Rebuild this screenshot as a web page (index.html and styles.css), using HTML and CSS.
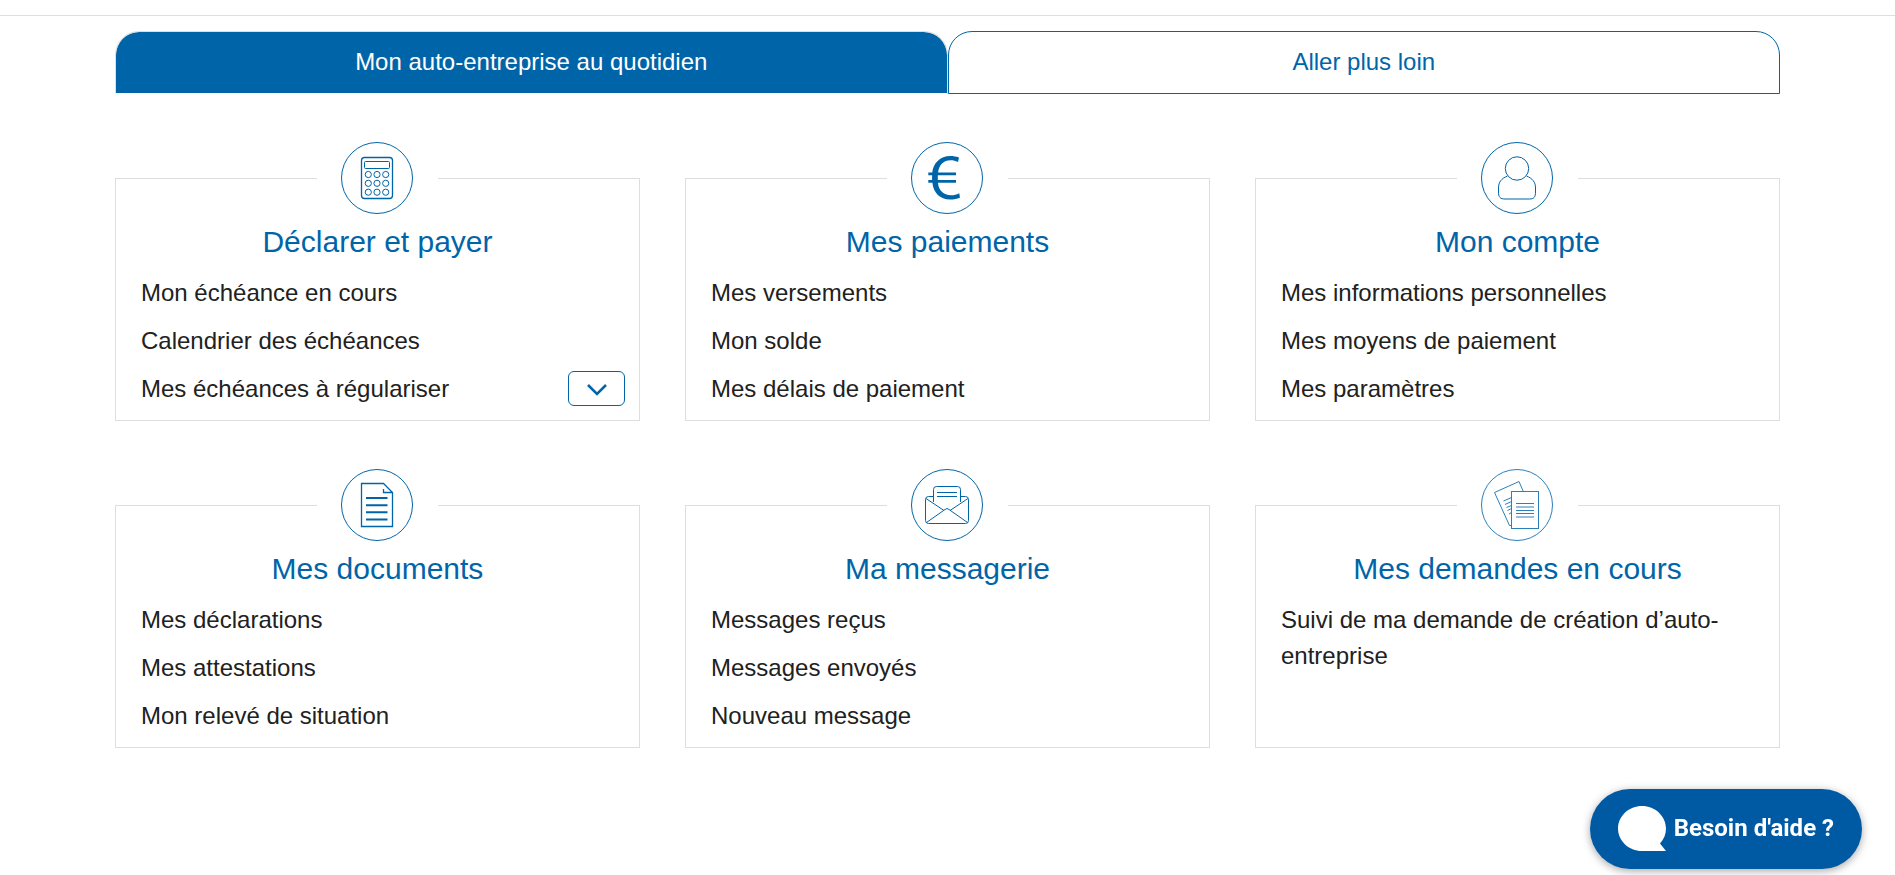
FILE: index.html
```html
<!DOCTYPE html>
<html lang="fr">
<head>
  <meta charset="UTF-8">
  <meta name="viewport" content="width=device-width, initial-scale=1.0">
  <title>Mon auto-entreprise</title>
  <link rel="stylesheet" href="styles.css">
</head>
<body>
  <header class="header"></header>

  <main class="container">
    <nav class="tabs">
      <a class="tab active" href="#quotidien">Mon auto-entreprise au quotidien</a>
      <a class="tab" href="#plus-loin">Aller plus loin</a>
    </nav>

    <div class="cards" id="quotidien">
      <section class="card">
        <div class="card-icon">
          <svg viewBox="0 0 72 72" aria-hidden="true">
            <circle cx="36" cy="36" r="35.5"/>
            <rect class="medium" x="20.5" y="15.5" width="31" height="41" rx="3"/>
            <rect x="23.5" y="19.5" width="25" height="7" rx="1"/>
            <circle cx="27.3" cy="32.5" r="3.1"/>
            <circle cx="36" cy="32.5" r="3.1"/>
            <circle cx="44.7" cy="32.5" r="3.1"/>
            <circle cx="27.3" cy="41.3" r="3.1"/>
            <circle cx="36" cy="41.3" r="3.1"/>
            <circle cx="44.7" cy="41.3" r="3.1"/>
            <circle cx="27.3" cy="50.2" r="3.1"/>
            <circle cx="36" cy="50.2" r="3.1"/>
            <circle cx="44.7" cy="50.2" r="3.1"/>
          </svg>
        </div>
        <h2 class="card-title">Déclarer et payer</h2>
        <ul class="card-list">
          <li><a href="#">Mon échéance en cours</a></li>
          <li><a href="#">Calendrier des échéances</a></li>
          <li>
            <a href="#">Mes échéances à régulariser</a>
            <button class="toggle" type="button" aria-label="Afficher les échéances">
              <svg viewBox="0 0 20 12" aria-hidden="true"><path d="M1 1L10 10L19 1"/></svg>
            </button>
          </li>
        </ul>
      </section>

      <section class="card">
        <div class="card-icon">
          <svg viewBox="0 0 72 72" aria-hidden="true">
            <circle cx="36" cy="36" r="35.5"/>
            <path class="fill" d="M48 15.5C45 14.5 42.5 14 39.5 14C29 14 22 21.5 21.3 30.5H17.3V33.3H21.1V38H17.3V40.8H21.400C22.5 51 29 57.5 39 57.5C43 57.5 46 57 49 55.5L48.2 51.2C45.5 52.6 43 53.2 40 53.2C32.5 53.2 27.5 48.5 27 40.8H45V38H26.8V33.3H45V30.5H27.1C28 23 32.5 18.3 39.5 18.3C42.5 18.3 44.5 18.8 47 20Z"/>
          </svg>
        </div>
        <h2 class="card-title">Mes paiements</h2>
        <ul class="card-list">
          <li><a href="#">Mes versements</a></li>
          <li><a href="#">Mon solde</a></li>
          <li><a href="#">Mes délais de paiement</a></li>
        </ul>
      </section>

      <section class="card">
        <div class="card-icon">
          <svg viewBox="0 0 72 72" aria-hidden="true">
            <circle cx="36" cy="36" r="35.5"/>
            <circle cx="36" cy="26.5" r="11.7"/>
            <path d="M26.5 34C20.5 36.5 17.5 40 17.5 46V50C17.5 55 19 57 24 57H48.5C53 57 54.5 55 54.5 50V46C54.5 40 51.5 36.5 45.5 34"/>
          </svg>
        </div>
        <h2 class="card-title">Mon compte</h2>
        <ul class="card-list">
          <li><a href="#">Mes informations personnelles</a></li>
          <li><a href="#">Mes moyens de paiement</a></li>
          <li><a href="#">Mes paramètres</a></li>
        </ul>
      </section>

      <section class="card">
        <div class="card-icon">
          <svg viewBox="0 0 72 72" aria-hidden="true">
            <circle cx="36" cy="36" r="35.5"/>
            <path class="medium" d="M42.5 14.5H20.5V57.5H51.5V23.5ZM42.5 20V23.5H51.5"/>
            <path class="bold" d="M25 29H46.5M25 36.2H46.5M25 43.3H46.5M25 50.5H46.5"/>
          </svg>
        </div>
        <h2 class="card-title">Mes documents</h2>
        <ul class="card-list">
          <li><a href="#">Mes déclarations</a></li>
          <li><a href="#">Mes attestations</a></li>
          <li><a href="#">Mon relevé de situation</a></li>
        </ul>
      </section>

      <section class="card">
        <div class="card-icon">
          <svg viewBox="0 0 72 72" aria-hidden="true">
            <circle cx="36" cy="36" r="35.5"/>
            <path d="M22.5 27.5H17.5Q14.5 27.5 14.5 30.5V51.5Q14.5 54.5 17.5 54.5H54.5Q57.5 54.5 57.5 51.5V30.5Q57.5 27.5 54.5 27.5H49.5"/>
            <path d="M22.5 33V20.5Q22.5 17.5 25.5 17.5H46.5Q49.5 17.5 49.5 20.5V33"/>
            <path d="M15 29.5L33 41.5M57 29.5L39 41.5M15.5 53.5L34 40.5Q36 38.5 38 40.5L56.5 53.5"/>
            <path d="M26 23.5H46M26 27.5H46"/>
          </svg>
        </div>
        <h2 class="card-title">Ma messagerie</h2>
        <ul class="card-list">
          <li><a href="#">Messages reçus</a></li>
          <li><a href="#">Messages envoyés</a></li>
          <li><a href="#">Nouveau message</a></li>
        </ul>
      </section>

      <section class="card">
        <div class="card-icon">
          <svg class="light" viewBox="0 0 72 72" aria-hidden="true">
            <circle cx="36" cy="36" r="35.5"/>
            <path d="M30.5 56.5H28.5L13.5 23.5L38 12.5L42.5 23"/>
            <path d="M22.5 32L30.5 28.5M24 35.5L30.5 32.5M25.5 38.5L30.5 36.5M26.5 41.5L30.5 39.5M28 45L30.5 43.5"/>
            <rect x="30.5" y="22.5" width="27" height="37"/>
            <path d="M35 34.5H53M35 38H53M35 41.5H53M35 44.5H53M35 48H53"/>
          </svg>
        </div>
        <h2 class="card-title">Mes demandes en cours</h2>
        <ul class="card-list">
          <li><a href="#">Suivi de ma demande de création d’auto-entreprise</a></li>
        </ul>
      </section>
    </div>
  </main>

  <button class="help" type="button">
    <svg viewBox="0 0 48 45" aria-hidden="true">
      <path d="M24 0C37 0 48 10 48 22.5C48 28 46 33 42 37.5L48 45H24C11 45 0 35 0 22.5C0 10 11 0 24 0Z"/>
    </svg>
    Besoin d'aide ?
  </button>
</body>
</html>
```
FILE: styles.css
```css
:root {
  --blue: #0065a8;
  --help-blue: #005aa3;
  --text: #212121;
  --border: #dedede;
}

* {
  box-sizing: border-box;
}

body {
  margin: 0;
  font-family: "Liberation Sans", Arial, sans-serif;
  font-size: 24px;
  line-height: 36px;
  color: var(--text);
  background-color: #fff;
}

a {
  color: inherit;
  text-decoration: none;
}

.header {
  height: 16px;
  border-bottom: 1px solid var(--border);
}

.container {
  max-width: 1665px;
  margin: 15px auto 0;
}

.tabs {
  display: flex;
}

.tab {
  flex: 1;
  padding: 12px 12px 13px;
  text-align: center;
  color: var(--blue);
  border: 1px solid var(--blue);
  border-radius: 24px 24px 0 0;
}

.tab.active {
  color: #fff;
  background-color: var(--blue);
  background-clip: padding-box;
  border-color: var(--border);
  border-bottom-color: #fff;
}

.cards {
  display: grid;
  grid-template-columns: repeat(3, 1fr);
  gap: 84px 45px;
  margin-top: 84px;
}

.card {
  min-height: 243px;
  border: 1px solid var(--border);
}

/* the white background cuts the card's top border */
.card-icon {
  width: 121px;
  margin: -37px auto 0;
  padding: 0 24px;
  background-color: #fff;
}

.card-icon svg {
  display: block;
  width: 72px;
  height: 72px;
  fill: none;
  stroke: var(--blue);
  stroke-width: 1;
}

.card-icon .light {
  stroke: #2c80ba;
}

.card-icon .medium {
  stroke-width: 1.3;
}

.card-icon .bold {
  stroke-width: 2;
}

.card-icon .fill {
  fill: var(--blue);
  stroke: none;
}

.card-title {
  margin: 10px 0 15px;
  text-align: center;
  font-size: 30px;
  font-weight: normal;
  line-height: 36px;
  color: var(--blue);
}

.card-list {
  margin: 0;
  padding: 0 14px 13px 25px;
  list-style: none;
}

.card-list li {
  display: flex;
  justify-content: space-between;
  align-items: flex-start;
}

.card-list li + li {
  margin-top: 12px;
}

.toggle {
  display: flex;
  justify-content: center;
  align-items: center;
  width: 57px;
  height: 35px;
  padding: 2px 0 0;
  border: 1px solid var(--blue);
  border-radius: 6px;
  background-color: #fff;
  cursor: pointer;
}

.toggle svg {
  width: 20px;
  height: 12px;
  fill: none;
  stroke: var(--blue);
  stroke-width: 2.5;
}

.help {
  position: fixed;
  right: 33px;
  bottom: 6px;
  display: flex;
  align-items: center;
  gap: 8px;
  height: 80px;
  padding: 0 28px 2px;
  border: none;
  border-radius: 40px;
  font-family: Roboto, sans-serif;
  font-size: 24px;
  font-weight: bold;
  color: #fff;
  background-color: var(--help-blue);
  box-shadow: 0 2px 8px rgba(0, 0, 0, 0.35);
  cursor: pointer;
}

.help svg {
  width: 48px;
  height: 45px;
  fill: #fff;
}
```
